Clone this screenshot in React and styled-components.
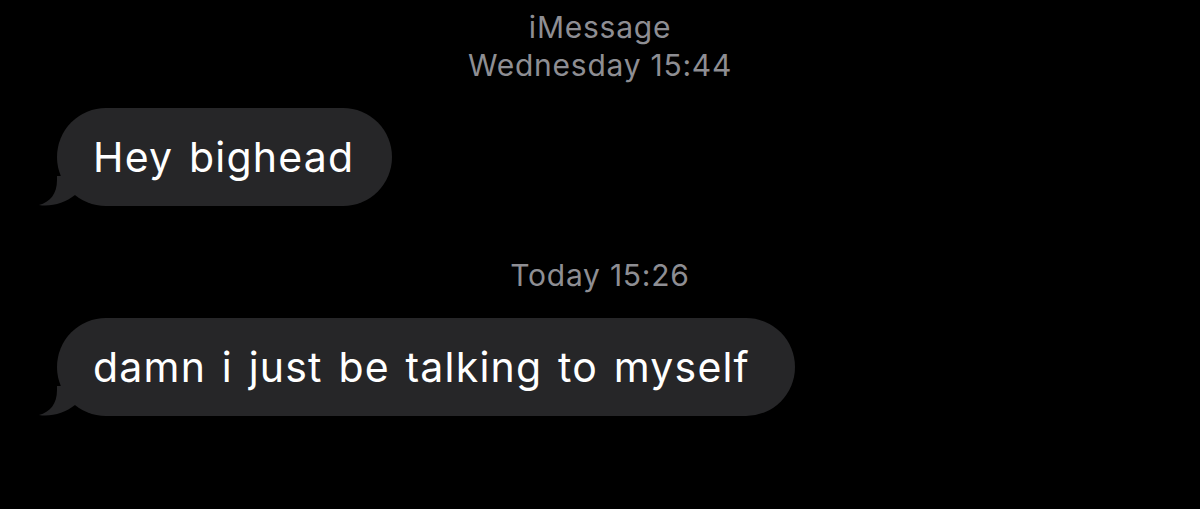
import React from "react";
import styled, { createGlobalStyle } from "styled-components";

const GlobalStyle = createGlobalStyle`
  html, body {
    margin: 0;
    padding: 0;
    background: #000;
  }
  body {
    font-family: Inter, "Noto Sans", "Liberation Sans", sans-serif;
    -webkit-font-smoothing: antialiased;
  }
`;

const thread = [
  {
    header: ["iMessage", "Wednesday 15:44"],
    messages: [{ text: "Hey bighead", padRight: 38 }],
  },
  {
    header: ["Today 15:26"],
    messages: [{ text: "damn i just be talking to myself", padRight: 45 }],
  },
];

// little hook at the bottom-left of an incoming bubble
function Tail() {
  return (
    <TailSvg viewBox="-20 -30 40 30" width="40" height="30" aria-hidden="true">
      <path d="M0 -30 L0 -26 C0 -12 -7 -4 -18 -1 C-6 1 8 -3 18 -11 L18 -30 Z" fill="#262628" />
    </TailSvg>
  );
}

function App() {
  return (
    <>
      <GlobalStyle />
      <Screen>
        {thread.map((group, i) => (
          <Group key={i} first={i === 0}>
            <Stamp>
              {group.header.map((line) => (
                <div key={line}>{line}</div>
              ))}
            </Stamp>
            {group.messages.map((msg) => (
              <Row key={msg.text}>
                <Bubble $padRight={msg.padRight}>
                  <Tail />
                  <Text>{msg.text}</Text>
                </Bubble>
              </Row>
            ))}
          </Group>
        ))}
      </Screen>
    </>
  );
}

const Screen = styled.div`
  width: 1200px;
  height: 509px;
  background: #000;
  overflow: hidden;
  display: flex;
  flex-direction: column;
`;

const Group = styled.section`
  display: flex;
  flex-direction: column;
  padding-top: ${(p) => (p.first ? "8px" : "50px")};
`;

const Stamp = styled.div`
  display: flex;
  flex-direction: column;
  align-items: center;
  color: #8e8e93;
  font-size: 30px;
  line-height: 38px;
  letter-spacing: 0.75px;
`;

const Row = styled.div`
  display: flex;
  padding-left: 57px;
  margin-top: 24px;
`;

const Bubble = styled.div`
  position: relative;
  background: #262628;
  color: #fff;
  font-size: 41px;
  line-height: 46px;
  letter-spacing: 1.2px;
  word-spacing: 3px;
  padding: 26px ${(p) => p.$padRight}px 26px 36px;
  border-radius: 49px;
  white-space: nowrap;
`;

const TailSvg = styled.svg`
  position: absolute;
  left: -20px;
  bottom: 0;
  display: block;
`;

const Text = styled.span`
  position: relative;
`;

export default App;
